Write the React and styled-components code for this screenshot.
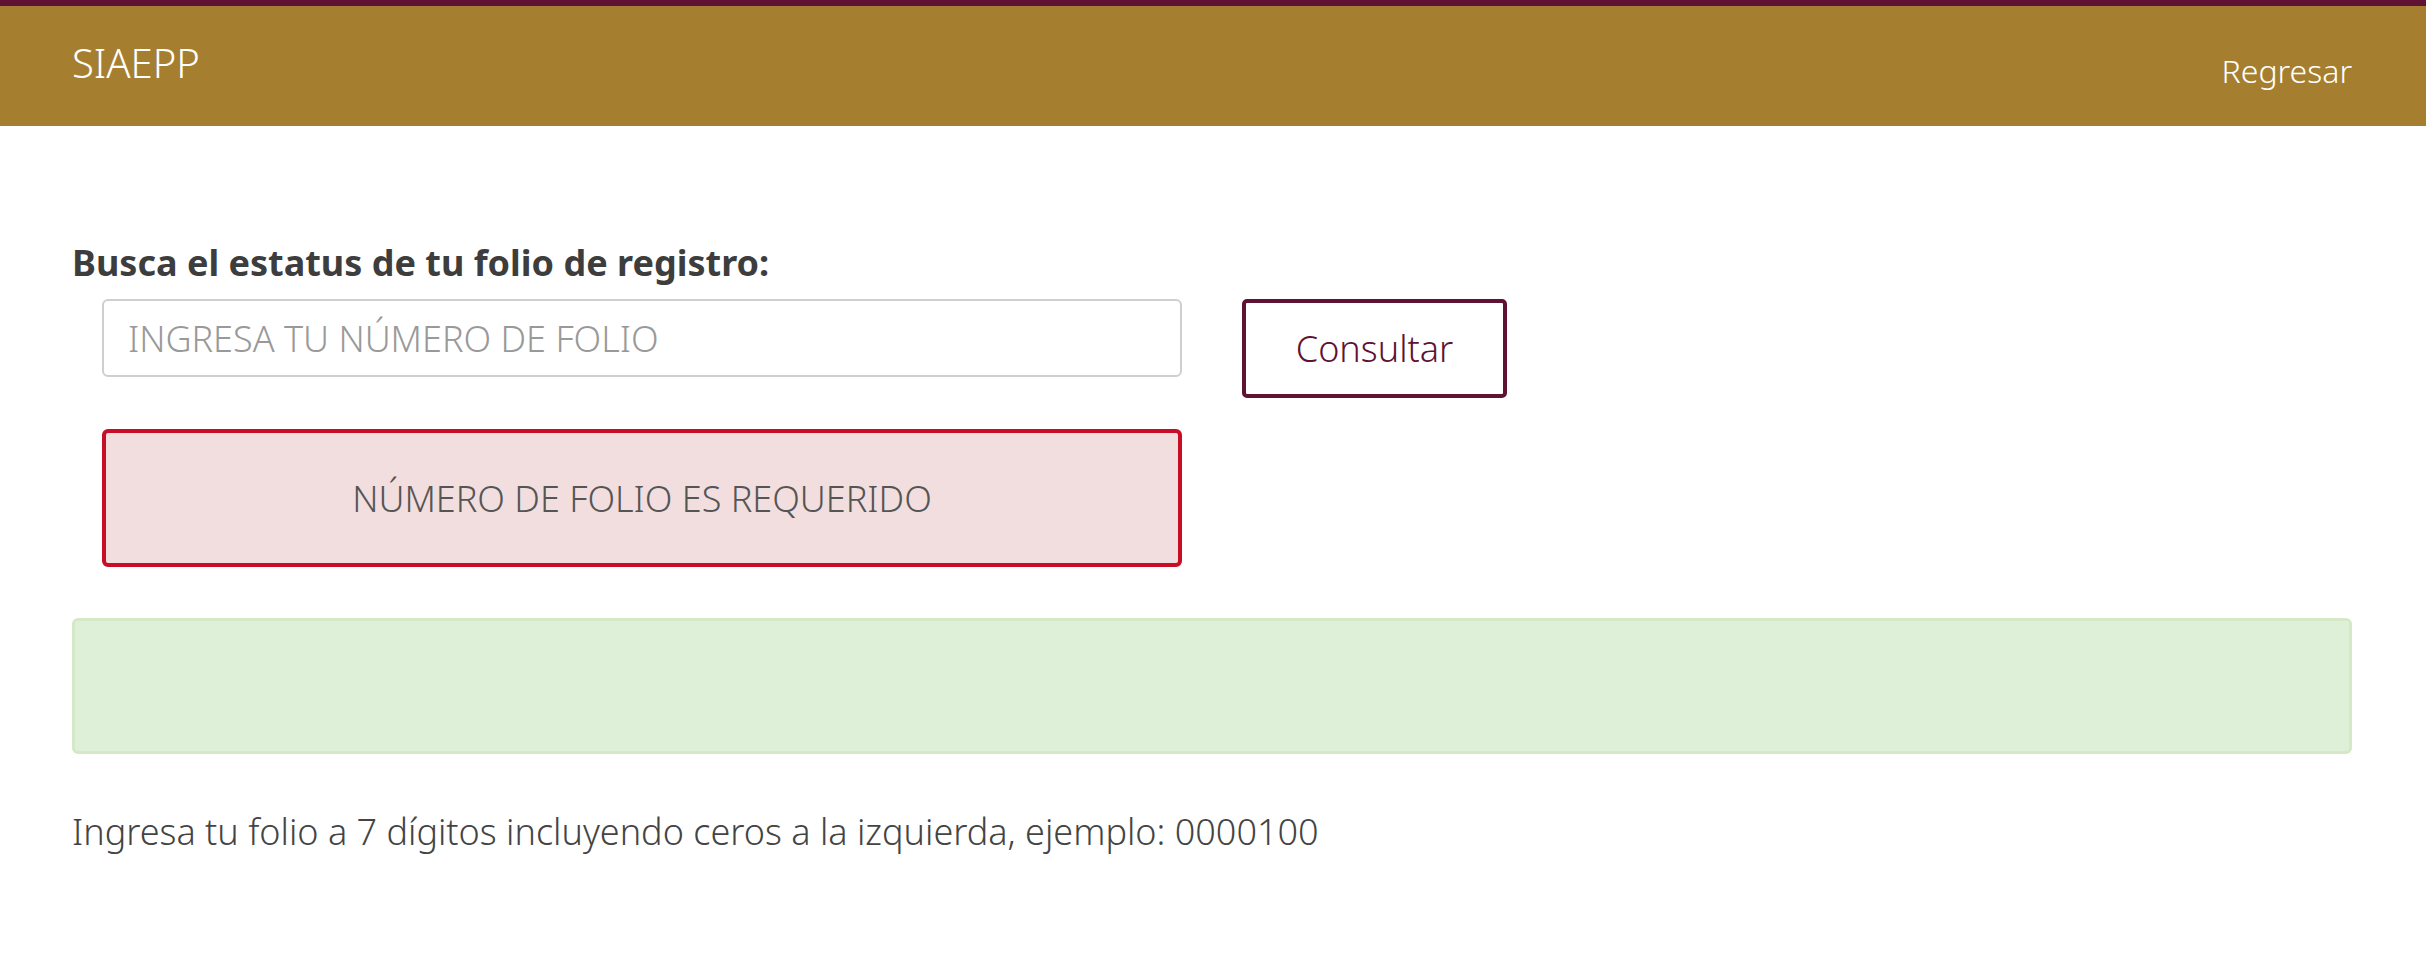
import React from "react";
import styled, { createGlobalStyle } from "styled-components";

const GlobalStyle = createGlobalStyle`
  body {
    margin: 0;
    background-color: #fff;
    font-family: "Noto Sans", "Open Sans", sans-serif;
    color: #444;
  }
`;

const NavBar = styled.header`
  display: flex;
  justify-content: space-between;
  align-items: flex-start;
  height: 120px;
  padding: 0 74px 0 72px;
  background-color: #a57f2f;
  border-top: 6px solid #5f1233;
`;

const Brand = styled.a`
  margin-top: ${(p) => p.$top}px;
  color: #fff;
  font-size: ${(p) => p.$size}px;
  font-weight: 300;
  line-height: 1;
  text-decoration: none;
`;

const Main = styled.main`
  padding: 115px 74px 0 72px;
`;

const Label = styled.label`
  display: block;
  font-size: 36px;
  font-weight: 700;
  color: #3d3d3d;
  line-height: 44px;
`;

const SearchRow = styled.div`
  display: flex;
  align-items: flex-start;
  gap: 60px;
  padding-left: 30px;
  margin-top: 14px;
`;

const Column = styled.div`
  display: flex;
  flex-direction: column;
  gap: 52px;
  width: 1080px;
`;

const Input = styled.input`
  box-sizing: border-box;
  height: 78px;
  padding: 0 24px;
  border: 2px solid #cfcfcf;
  border-radius: 6px;
  font-family: "Noto Sans", sans-serif;
  font-size: 36px;
  font-weight: 300;
  color: #444;

  &::placeholder {
    color: #999;
  }
`;

const Button = styled.button`
  box-sizing: border-box;
  width: 265px;
  height: 99px;
  border: 4px solid #5f1233;
  border-radius: 5px;
  background-color: #fff;
  color: #5f1233;
  font-family: "Noto Sans", sans-serif;
  font-size: 36px;
  font-weight: 300;
  cursor: pointer;
`;

const Alert = styled.div`
  box-sizing: border-box;
  display: flex;
  align-items: center;
  justify-content: ${(p) => (p.$center ? "center" : "flex-start")};
  height: ${(p) => p.$height}px;
  border: ${(p) => p.$width}px solid ${(p) => p.$border};
  border-radius: 6px;
  background-color: ${(p) => p.$bg};
  color: #555;
  font-size: 36px;
  font-weight: 300;
`;

const Results = styled.div`
  margin-top: 51px;
`;

const Hint = styled.p`
  margin: 52px 0 0;
  font-size: 36px;
  font-weight: 300;
  color: #444;
  line-height: 52px;
`;

const App = () => {
  return (
    <>
      <GlobalStyle />
      <NavBar>
        <Brand href="#" $top={37} $size={40}>
          SIAEPP
        </Brand>
        <Brand href="#" $top={49} $size={32}>
          Regresar
        </Brand>
      </NavBar>
      <Main>
        <Label htmlFor="folio">Busca el estatus de tu folio de registro:</Label>
        <SearchRow>
          <Column>
            <Input id="folio" placeholder="INGRESA TU NÚMERO DE FOLIO" />
            <Alert $height={138} $width={4} $border="#c80d26" $bg="#f2dede" $center>
              NÚMERO DE FOLIO ES REQUERIDO
            </Alert>
          </Column>
          <Button type="button">Consultar</Button>
        </SearchRow>
        <Results>
          <Alert $height={136} $width={3} $border="#d6e9c6" $bg="#dff0d8" />
        </Results>
        <Hint>
          Ingresa tu folio a 7 dígitos incluyendo ceros a la izquierda, ejemplo: 0000100
        </Hint>
      </Main>
    </>
  );
};

export default App;
